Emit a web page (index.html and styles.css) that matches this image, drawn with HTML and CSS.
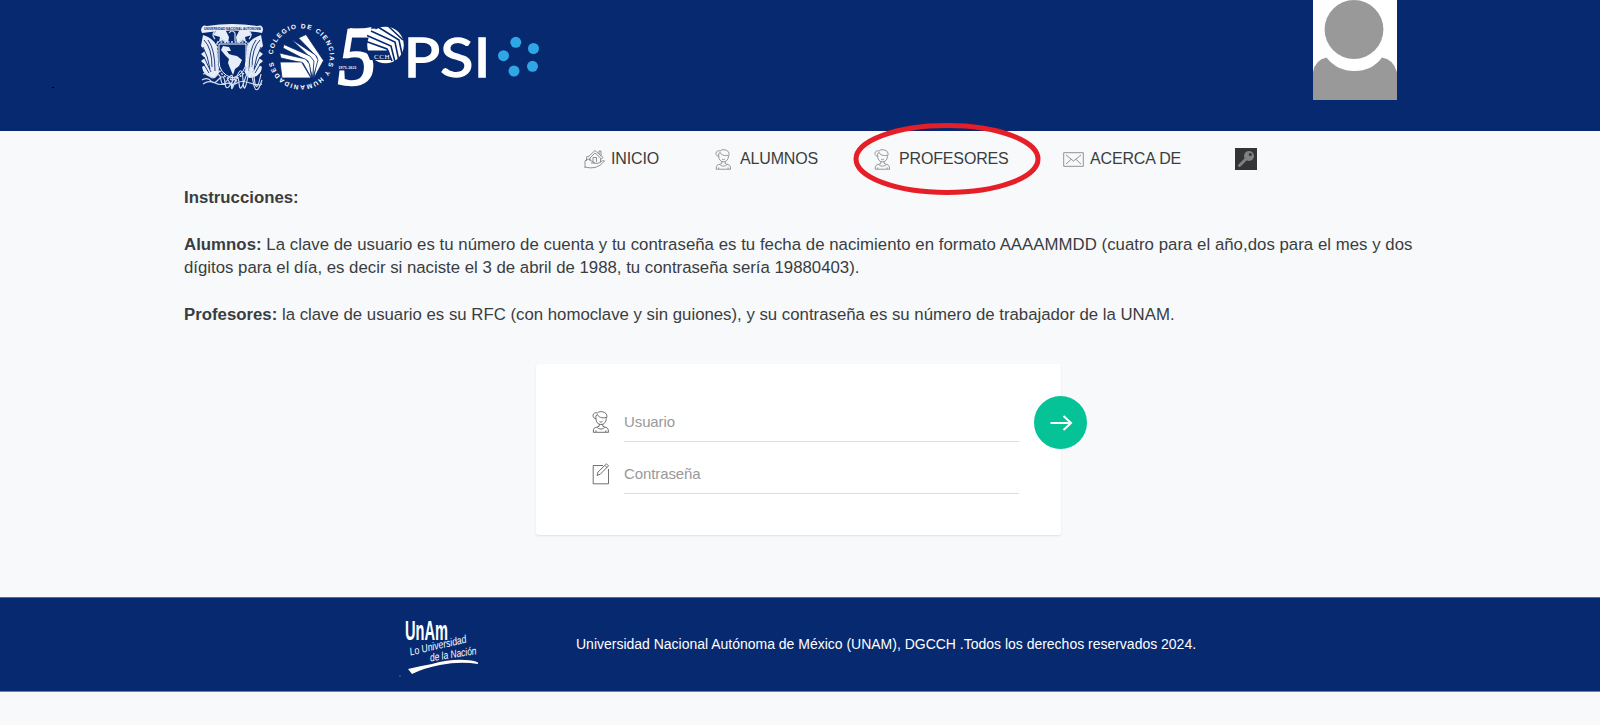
FILE: index.html
```html
<!DOCTYPE html>
<html lang="es">
<head>
<meta charset="utf-8">
<title>PSI - CCH UNAM</title>
<link rel="stylesheet" href="styles.css">
</head>
<body>
<svg class="sprite" width="0" height="0" aria-hidden="true">
  <symbol id="person" viewBox="0 0 18 22">
    <path d="M4 8C4 11 6 13.500 9 13.500S14.200 11 14.300 7.500C15.500 5.500 15 2.500 12.500 1.500 10 .2 6.500.3 5.500 2M5.500 2C3 1.200 1 2.500 1 4.500 1 6.500 2.500 7.500 4 7.800 3.500 5.500 4 4 5.500 3.500M5.500 3.500C6 6 10 7.500 14 6.500M7.200 13.200v2C5.500 16.300 2 16 1.500 18.500L1.300 21.300H16.500L16.200 18.500C15.500 16 12.500 16.300 10.800 15.200V13.200M5 16.200C6.500 18.600 11.500 18.600 13 16.200M4 21v-1.600M13.800 21v-1.600M7.500 10.600Q9 11.800 10.500 10.600"/>
  </symbol>
</svg>

<header class="header">
  <svg class="brand" width="372" height="90" viewBox="190 10 372 90">
    <g class="crest">
      <path d="M201 30Q202 24 207 26Q232 22 257 26Q263 24 263 30L262 33Q232 28 202 33Z"/>
      <path d="M213 35l4-5q5-3 9 1l3 6-1 6-5-3-4 2 1-5zM252 35l-4-5q-5-3-9 1l-3 6 1 6 5-3 4 2-1-5z"/>
      <path d="M203 35q10 3 14 11l2 27-4 5q-12-1-13-11l3-2-4-4 4-3-4-4 4-3-4-5zM261 35q-10 3-14 11l-2 27 4 5q12-1 13-11l-3-2 4-4-4-3 4-4-4-3 4-5z"/>
      <path class="cut" d="M204 40q8 8 8 27M208 40q7 9 7 31M203 47q5 9 7 22M260 40q-8 8-8 27M256 40q-7 9-7 31M261 47q-5 9-7 22M204 57l7 15M260 57l-7 15M203 63l6 10M261 63l-6 10"/>
      <path class="shield" d="M219 44H246V61Q246 74 232.500 78Q219 74 219 61Z"/>
      <path class="dots" d="M217 42H248V61Q248 75 232.500 80Q217 75 217 61Z"/>
      <path d="M223 46l6 1 2 4-4 0 2 3 3 1 5 1 5 4-3 6-4 3-2 6-3-7-2-5 1-4-4-4-4-5z"/>
      <path class="lace" d="M203 74q5-2 7 2t6 0 5 4 7-1 4 4 4-4 7 1 5-4 6 0 7-2M202 80q6-3 9 1t8-2 6 4 7-1 7 1 6-4 8 2 9-1M203 84q6-4 12-1t13 0q5 3 9 0t13 0 12 1M228 80l4 6 5-6"/>
      <path class="lace" d="M215 31q-4 4 0 8M249 31q4 4 0 8M229 33q3-4 6 0v8M221 38l5 5M244 38l-5 5"/>
    </g>
    <text class="crest-text" x="204" y="30" textLength="57" lengthAdjust="spacingAndGlyphs">UNIVERSIDAD NACIONAL AUTONOMA</text>

    <path id="ring" d="M272.800 54.500A28.500 28.500 0 1 1 272.800 59" fill="none"/>
    <text class="ring-text"><textPath href="#ring" startOffset="0" textLength="171">COLEGIO DE CIENCIAS Y HUMANIDADES</textPath></text>
    <g class="book">
      <path d="M298.500 38L306 34.500 323.500 60.500 314 78 317 57Z"/>
      <path d="M291 39L315.500 55 318 60 313 78 313 60Z"/>
      <path d="M284 44.500L310 56 314 61 312.500 78 308 61 283 48Z"/>
      <path d="M279.500 53L305.500 59 309.500 64 311.500 78 303 63 281 58Z"/>
      <path d="M280 62H301.500L311 78H282Z"/>
    </g>
    <text class="five" transform="translate(338 84) scale(.94 1)">5</text>
    <path d="M350 28Q360 29.500 371.500 27L369 34.500H349Z" fill="#fff"/>
    <text class="years" x="338.500" y="68.500" textLength="18">1971-2021</text>
    <g>
      <circle cx="385.500" cy="45" r="18.300" fill="#fff"/>
      <path class="bookline" d="M365 41L387 49 392 61M367 35.500L391 46 395 62M371 31L395 42 398.500 59M378 27L399 40 402 54M388 26L403 40"/>
      <path d="M366 50.500H389L391 60H370Z" fill="#07296f"/>
      <text class="cch" x="374" y="58.500" textLength="15.500">CCH</text>
    </g>
    <text class="psi" x="403.500" y="76.500" textLength="87" lengthAdjust="spacingAndGlyphs">PSI</text>
    <g fill="#2ea7e4"><circle cx="515.800" cy="42.300" r="5.500"/><circle cx="533.500" cy="48.500" r="5.500"/><circle cx="503.500" cy="55.700" r="5.500"/><circle cx="532.500" cy="66.300" r="5.500"/><circle cx="514" cy="71" r="5.500"/></g>
  </svg>
  <svg class="avatar" width="84" height="100" viewBox="0 0 84 100">
    <rect width="84" height="100" fill="#fff"/>
    <path d="M0 100V72Q2 60 13.500 57.500Q24 71 41.500 71T69 57.500Q80 59 84 72V100Z" fill="#999"/>
    <circle cx="41" cy="29.500" r="29.400" fill="#999"/>
  </svg>
  <i class="speck"></i>
</header>

<nav class="nav">
  <a class="item home">
    <svg class="line" width="22" height="20" viewBox="0 0 22 20"><path d="M4 8L11 1.500 19 8.500 17.500 10 11 4 5.500 9.500M6 9V12M16.500 9.500V13.500M15 5V2h2v5M9 13V8.500h3.500V13M2.500 12V8.500Q2.500 6.500 4 8M1 19V12Q4 8 8 12.500L11 14H7M1 18Q6 19.500 11 18.500T20.500 12Q19 10.500 15 14L11 14.500"/></svg>
    <span>INICIO</span>
  </a>
  <a class="item students"><svg class="line" width="17" height="21"><use href="#person"/></svg><span>ALUMNOS</span></a>
  <a class="item teachers"><svg class="line" width="17" height="21"><use href="#person"/></svg><span>PROFESORES</span>
    <svg class="marker" width="188" height="74" viewBox="0 0 188 74"><ellipse cx="94" cy="37" rx="91" ry="33.500"/></svg>
  </a>
  <a class="item about">
    <svg class="line" width="21" height="15" viewBox="0 0 21 15"><path d="M.7.700H20.300V14.300H.7ZM3 3L10.500 9 18 3M3 12L8 7.500M18 12L13 7.500"/></svg>
    <span>ACERCA DE</span>
  </a>
  <a class="item key"><svg width="22" height="22" viewBox="0 0 22 22"><rect width="22" height="22" fill="#343434"/><path d="M11 11L4.500 17.500" stroke="#808080" stroke-width="3" stroke-linecap="round"/><circle cx="14" cy="8" r="5" fill="#808080"/><circle cx="15.300" cy="6.500" r="1.500" fill="#343434"/></svg></a>
</nav>

<main class="main">
  <section class="help">
    <p><b>Instrucciones:</b></p>
    <p><span class="wide"><b>Alumnos:</b> La clave de usuario es tu número de cuenta y tu contraseña es tu fecha de nacimiento en formato AAAAMMDD (cuatro para el año,dos para el mes y dos</span><br>dígitos para el día, es decir si naciste el 3 de abril de 1988, tu contraseña sería 19880403).</p>
    <p><b>Profesores:</b> la clave de usuario es su RFC (con homoclave y sin guiones), y su contraseña es su número de trabajador de la UNAM.</p>
  </section>
  <form class="login">
    <label class="field"><svg class="line dark" width="18" height="22"><use href="#person"/></svg><span class="input">Usuario</span></label>
    <label class="field"><svg class="line dark" width="18" height="22" viewBox="0 0 18 22"><path d="M11 2.500H1.200V20.800H16.500V6M5 12.500L6 9 14.500.800 16.500 2.800 8.300 11.200ZM13 2.500L15 4.500"/></svg><span class="input">Contraseña</span></label>
    <button class="go" type="button" aria-label="Entrar"><svg width="24" height="18" viewBox="0 0 24 18"><path d="M1.500 9H22M14.500 2L22 9 14.500 16"/></svg></button>
  </form>
</main>

<footer class="footer">
  <svg class="motto" width="84" height="68" viewBox="396 610 84 68">
    <text class="unam" transform="translate(405 640) scale(1 1.350)" textLength="43" lengthAdjust="spacingAndGlyphs">UnAm</text>
    <path d="M408 669Q420 666 432 664Q450 659 465 660Q474 660 478 662.500V664Q460 661 440 665Q424 668 412 674Z" fill="#fff"/>
    <text class="script" transform="translate(410.500 655.500) rotate(-13)" textLength="58" lengthAdjust="spacingAndGlyphs">Lo Universidad</text>
    <text class="script" transform="translate(430.500 661.500) rotate(-9)" textLength="47" lengthAdjust="spacingAndGlyphs">de la Nación</text>
    <circle cx="400" cy="676" r=".6" fill="#9fb0cf"/>
  </svg>
  <span class="rights">Universidad Nacional Autónoma de México (UNAM), DGCCH .Todos los derechos reservados 2024.</span>
</footer>
</body>
</html>
```
FILE: styles.css
```css
* { box-sizing: border-box; }
body { margin: 0; height: 725px; overflow: hidden; background: #f7f9fb; color: #3a3d3f; font-family: "Liberation Sans", Arial, sans-serif; }
.sprite { position: absolute; }
svg { display: block; flex: none; }

.header { position: relative; height: 131px; background: #07296f; display: flex; justify-content: space-between; align-items: flex-start; padding: 0 203px 0 190px; }
.brand { margin-top: 10px; }
.speck { position: absolute; left: 52px; top: 87px; width: 2px; height: 1px; background: #000; }
.crest { fill: #e8eef9; }
.lace { fill: none; stroke: #d5dff1; stroke-width: 1.2; }
.cut { fill: none; stroke: #07296f; stroke-width: .9; }
.shield { fill: #07296f; stroke: #fff; stroke-width: 1; }
.dots { fill: none; stroke: #d5dff1; stroke-width: 1.6; stroke-dasharray: 2 1.5; }
.crest-text { font: bold 4px "Liberation Sans", sans-serif; fill: #07296f; }
.ring-text { font: bold 6.5px "Liberation Sans", sans-serif; fill: #fff; }
.book { fill: #fff; stroke: #07296f; stroke-width: .8; }
.five { font: italic 82px "Liberation Serif", serif; fill: #fff; stroke: #fff; stroke-width: 2.6; }
.years { font: bold 4px "Liberation Serif", serif; fill: #fff; }
.bookline { fill: none; stroke: #07296f; stroke-width: 1.6; }
.cch { font: 7px "Liberation Serif", serif; fill: #fff; }
.psi { font: 55px Lato, sans-serif; fill: #fff; stroke: #fff; stroke-width: 1.4; }

.nav { height: 56px; padding-left: 584px; display: flex; align-items: center; font-size: 16px; letter-spacing: -.15px; }
.item { display: flex; align-items: center; position: relative; white-space: nowrap; height: 24px; }
.line { fill: none; stroke: #777; stroke-width: .8; }
.dark { stroke: #4c4c4c; }
.home { width: 131px; gap: 5px; }
.students { width: 159px; gap: 8px; }
.teachers { width: 189px; gap: 8px; }
.about { width: 172px; gap: 6px; }
.marker { position: absolute; left: -21px; top: -25px; fill: none; stroke: #e61e27; stroke-width: 5; }

.main { height: 411px; margin-top: -1px; padding-left: 184px; }
.help { height: 178px; font-size: 16.8px; line-height: 23.4px; white-space: nowrap; }
.help p { margin: 0 0 23.4px; }
.wide { letter-spacing: .03px; }
.login { position: relative; width: 525px; height: 171px; margin-left: 352px; padding: 32px 42px 0 56px; background: #fff; border-radius: 3px; box-shadow: 0 1px 2px rgba(0,0,0,.1); }
.field { display: flex; align-items: center; gap: 14px; height: 52px; }
.input { flex: 1; height: 40px; border-bottom: 1.5px solid #dedede; color: #999; font-size: 15px; line-height: 40px; letter-spacing: -.1px; }
.go { position: absolute; left: 498px; top: 32px; width: 53px; height: 53px; padding: 0; border: 0; border-radius: 50%; background: #05c396; display: grid; place-items: center; }
.go path { fill: none; stroke: #fff; stroke-width: 2; }

.footer { height: 95px; background: #07296f; border-top: 1px solid #55709f; border-bottom: 1px solid #6c83ab; display: flex; align-items: center; padding: 0 0 2px 396px; }
.unam { font: bold 20px "Liberation Sans", sans-serif; fill: #fff; }
.script { font: italic 11px "Liberation Sans", sans-serif; fill: #fff; }
.rights { margin-left: 96px; color: #fff; font-size: 14px; letter-spacing: -.01px; white-space: nowrap; }
```
